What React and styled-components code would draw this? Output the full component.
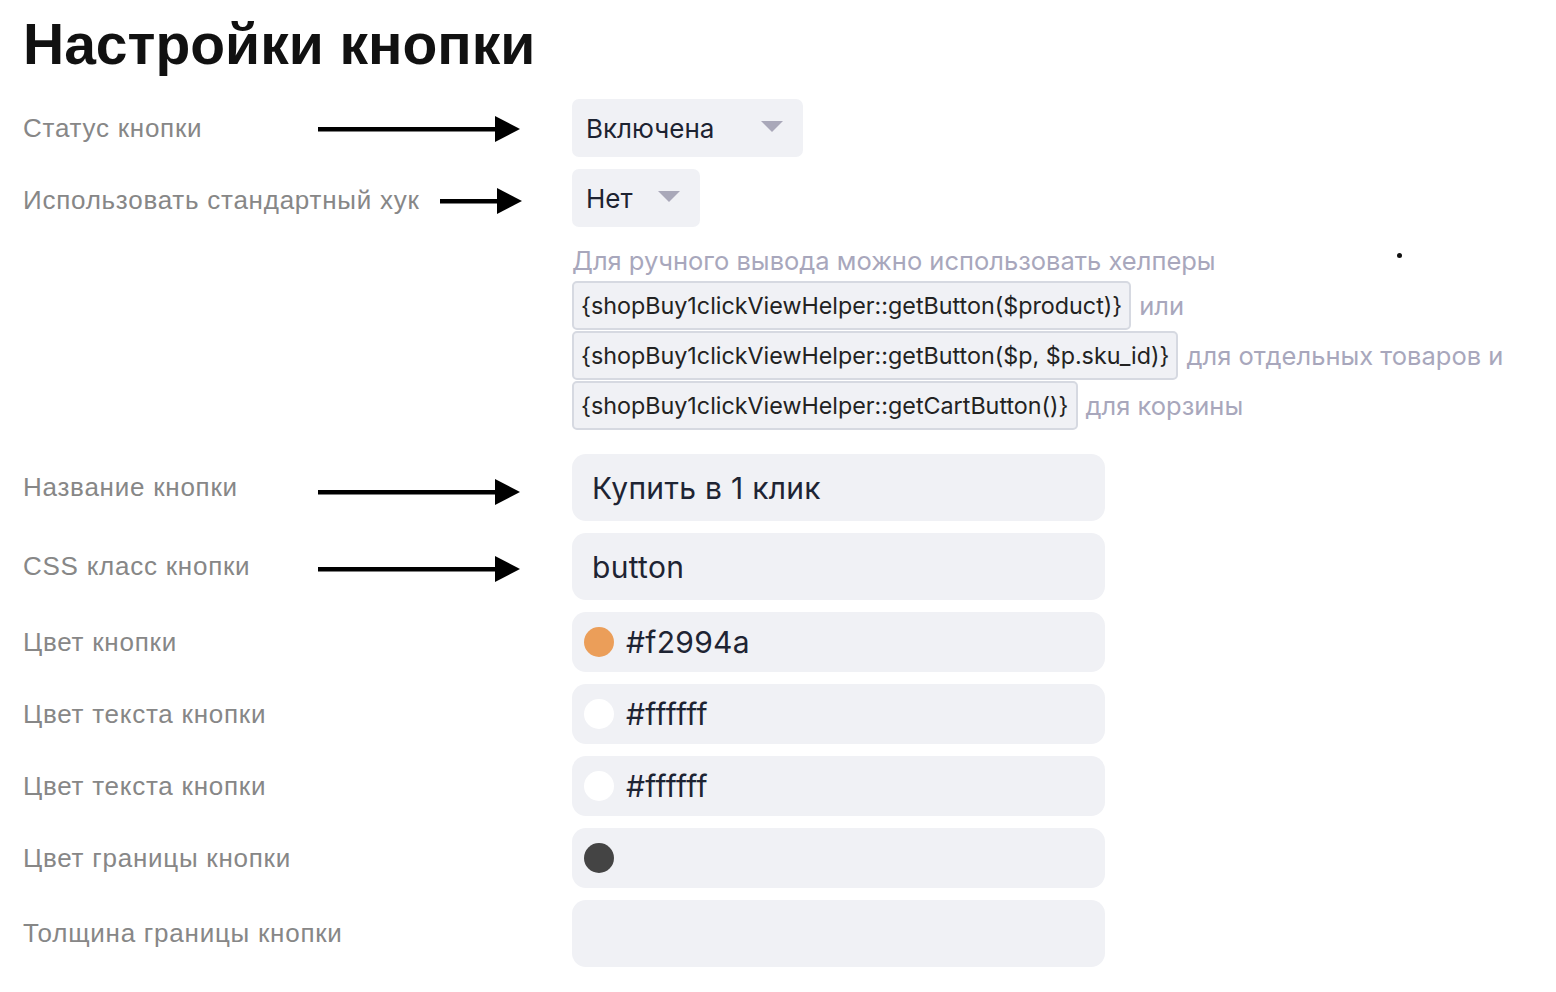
import styled, { createGlobalStyle } from "styled-components";

const GlobalStyle = createGlobalStyle`
	html, body {
		margin: 0;
		padding: 0;
		background: #ffffff;
	}
	* {
		box-sizing: border-box;
	}
`;

const Page = styled.div`
	padding: 16px 23px 0;
	font-family: "Liberation Sans", Arial, sans-serif;
`;

const Title = styled.h1`
	margin: 0 0 26px;
	font-size: 57px;
	line-height: 1;
	font-weight: 700;
	color: #111111;
`;

const Form = styled.div`
	display: flex;
	flex-direction: column;
	gap: 12px;
`;

const Row = styled.div`
	display: grid;
	grid-template-columns: 497px 533px;
	column-gap: 52px;
	align-items: center;
`;

const LabelCell = styled.div`
	display: flex;
	align-items: center;
	gap: 20px;
	position: relative;
	top: ${(p) => p.$shift || 0}px;
`;

const Label = styled.span`
	font-size: 26px;
	letter-spacing: 0.75px;
	color: #878787;
	white-space: nowrap;
`;

const ArrowWrap = styled.svg`
	margin-left: auto;
	flex: 0 0 auto;
	display: block;
	position: relative;
	top: ${(p) => p.$shift || 1}px;
`;

const Select = styled.div`
	display: inline-flex;
	align-items: center;
	gap: ${(p) => p.$gap}px;
	height: 58px;
	padding: 0 20px 0 14px;
	background: #f0f1f5;
	border-radius: 7px;
	font-family: Inter, "Noto Sans", sans-serif;
	font-size: 26px;
	color: #1d2331;
	justify-self: start;
`;

const Caret = styled.span`
	width: 0;
	height: 0;
	border-left: 11px solid transparent;
	border-right: 11px solid transparent;
	border-top: 11px solid #a9a8b9;
	margin-top: -4px;
`;

const Help = styled.div`
	position: relative;
	padding-bottom: 11px;
	font-family: Inter, "Noto Sans", sans-serif;
	font-size: 25.5px;
	color: #a8a7bc;
	white-space: nowrap;
`;

const HelpLine = styled.div`
	display: flex;
	align-items: center;
	gap: 8px;
	height: ${(p) => (p.$first ? 42 : 50)}px;
	padding-bottom: ${(p) => (p.$first ? 0 : 2)}px;
`;

const Chip = styled.code`
	display: inline-flex;
	align-items: center;
	height: 49px;
	padding: 0 7px;
	border: 2px solid #d6d9e1;
	border-radius: 5px;
	background: #f0f1f5;
	font-family: Inter, "Noto Sans", sans-serif;
	font-size: 23.3px;
	color: #222222;
`;

const Dot = styled.span`
	position: absolute;
	left: 825px;
	top: 14px;
	width: 5px;
	height: 5px;
	border-radius: 50%;
	background: #111111;
`;

const Field = styled.div`
	display: flex;
	align-items: center;
	gap: 12px;
	height: ${(p) => (p.$tall ? 67 : 60)}px;
	padding: 0 ${(p) => (p.$swatch ? 12 : 20)}px;
	background: #f0f1f5;
	border-radius: 14px;
	font-family: Inter, "Noto Sans", sans-serif;
	font-size: 30px;
	letter-spacing: 0.3px;
	color: #1e2433;
`;

const Swatch = styled.span`
	width: 30px;
	height: 30px;
	border-radius: 50%;
	background: ${(p) => p.$color};
	flex: 0 0 auto;
`;

const Arrow = ({ width = 202, shift }) => (
	<ArrowWrap width={width} height="26" viewBox={`0 0 ${width} 26`} $shift={shift}>
		<rect x="0" y="11" width={width - 24} height="4.5" fill="#000" />
		<polygon points={`${width - 25},0 ${width},13 ${width - 25},26`} fill="#000" />
	</ArrowWrap>
);

const colorRows = [
	{ label: "Цвет кнопки", color: "#eb9e59", value: "#f2994a" },
	{ label: "Цвет текста кнопки", color: "#ffffff", value: "#ffffff" },
	{ label: "Цвет текста кнопки", color: "#ffffff", value: "#ffffff" },
	{ label: "Цвет границы кнопки", color: "#444444", value: "" },
];

const App = () => {
	return (
		<Page>
			<GlobalStyle />
			<Title>Настройки кнопки</Title>
			<Form>
				<Row>
					<LabelCell>
						<Label>Статус кнопки</Label>
						<Arrow />
					</LabelCell>
					<Select $gap={47}>
						Включена
						<Caret />
					</Select>
				</Row>
				<Row>
					<LabelCell $shift={2}>
						<Label>Использовать стандартный хук</Label>
						<Arrow width={82} />
					</LabelCell>
					<Select $gap={25}>
						Нет
						<Caret />
					</Select>
				</Row>
				<Row>
					<div />
					<Help>
						<Dot />
						<HelpLine $first>Для ручного вывода можно использовать хелперы</HelpLine>
						<HelpLine>
							<Chip>{"{shopBuy1clickViewHelper::getButton($product)}"}</Chip>
							или
						</HelpLine>
						<HelpLine>
							<Chip>{"{shopBuy1clickViewHelper::getButton($p, $p.sku_id)}"}</Chip>
							для отдельных товаров и
						</HelpLine>
						<HelpLine>
							<Chip>{"{shopBuy1clickViewHelper::getCartButton()}"}</Chip>
							для корзины
						</HelpLine>
					</Help>
				</Row>
				<Row>
					<LabelCell>
						<Label>Название кнопки</Label>
						<Arrow shift={4} />
					</LabelCell>
					<Field $tall>Купить в 1 клик</Field>
				</Row>
				<Row>
					<LabelCell>
						<Label>CSS класс кнопки</Label>
						<Arrow shift={2} />
					</LabelCell>
					<Field $tall>button</Field>
				</Row>
				{colorRows.map((row, i) => (
					<Row key={i}>
						<LabelCell>
							<Label>{row.label}</Label>
						</LabelCell>
						<Field $swatch>
							<Swatch $color={row.color} />
							{row.value}
						</Field>
					</Row>
				))}
				<Row>
					<LabelCell>
						<Label>Толщина границы кнопки</Label>
					</LabelCell>
					<Field $tall />
				</Row>
			</Form>
		</Page>
	);
};

export default App;
